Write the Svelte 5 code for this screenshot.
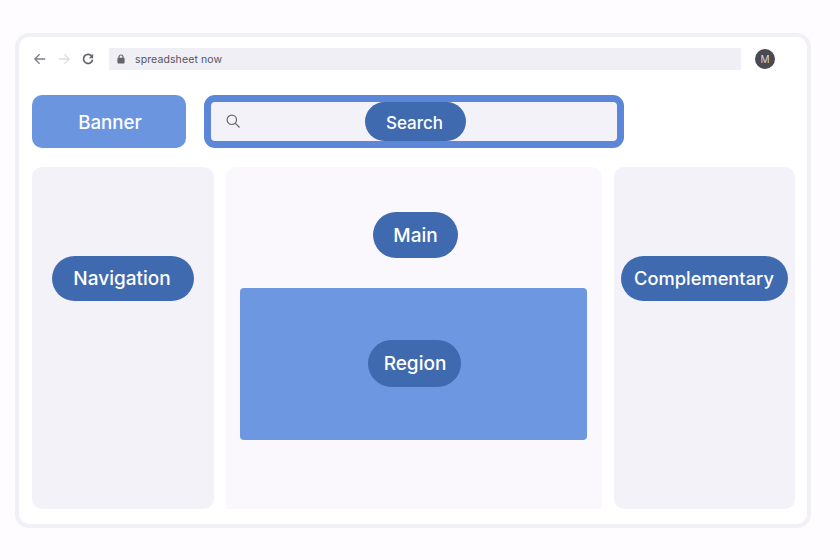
<script>
	const address = 'spreadsheet now';
</script>

<div class="page">
	<div class="frame">
		<div class="toolbar">
			<div class="nav-buttons">
				<svg class="nav-icon" viewBox="0 0 14 14" width="12" height="12">
					<path d="M13 7H1.500M6.500 1.500 1 7l5.500 5.500" />
				</svg>
				<svg class="nav-icon disabled" viewBox="0 0 14 14" width="12" height="12">
					<path d="M1 7h11.500M7.500 1.500 13 7l-5.500 5.500" />
				</svg>
				<svg class="nav-icon reload" viewBox="0 0 14 14" width="12" height="12">
					<path d="M11.600 4.200A5.300 5.300 0 1 0 12.300 7.600" />
					<path class="solid" d="M13 1v5H8z" />
				</svg>
			</div>
			<div class="address">
				<svg viewBox="0 0 10 12" width="8" height="10">
					<path class="lock" d="M2.500 5V3.500a2.500 2.500 0 0 1 5 0V5" />
					<rect x="0.500" y="4.500" width="9" height="7" rx="1" />
				</svg>
				<span>{address}</span>
			</div>
			<div class="avatar">M</div>
		</div>

		<div class="top-row">
			<div class="banner">Banner</div>
			<div class="search">
				<svg class="search-icon" viewBox="0 0 14 14" width="14" height="14">
					<circle cx="5.800" cy="5.800" r="4.700" />
					<path d="M9.200 9.200 13.500 13.500" />
				</svg>
				<div class="pill search-pill">Search</div>
			</div>
		</div>

		<div class="columns">
			<aside class="side">
				<div class="pill nav-pill">Navigation</div>
			</aside>
			<main class="content">
				<div class="pill main-pill">Main</div>
				<section class="region">
					<div class="pill region-pill">Region</div>
				</section>
			</main>
			<aside class="side comp-side">
				<div class="pill comp-pill">Complementary</div>
			</aside>
		</div>
	</div>
</div>

<style>
	:global(body) {
		background: #fefcff;
	}

	.page {
		width: 840px;
		height: 560px;
		box-sizing: border-box;
		padding: 33px 29px 32px 15px;
		font-family: Inter, 'Liberation Sans', sans-serif;
		background: #fefcff;
	}

	.frame {
		height: 100%;
		box-sizing: border-box;
		background: #fff;
		border: 4px solid #f1f0f6;
		border-radius: 14px;
		padding: 11px 12px 15px 13px;
		display: flex;
		flex-direction: column;
	}

	.toolbar {
		height: 22px;
		display: flex;
		align-items: center;
	}

	.nav-buttons {
		width: 77px;
		flex-shrink: 0;
		box-sizing: border-box;
		padding-left: 2px;
		display: flex;
		align-items: center;
		gap: 12px;
	}

	.nav-icon {
		fill: none;
		stroke: #7d7c84;
		stroke-width: 1.500;
	}

	.nav-icon.disabled {
		stroke: #dcdce2;
	}

	.nav-icon.reload {
		stroke: #66656c;
		stroke-width: 2;
	}

	.nav-icon .solid {
		fill: #66656c;
		stroke: none;
	}

	.address {
		width: 632px;
		height: 22px;
		flex-shrink: 0;
		background: #f0eff6;
		display: flex;
		align-items: center;
		padding-left: 8px;
		box-sizing: border-box;
		font-size: 10.500px;
		letter-spacing: 0.110px;
		color: #55545c;
	}

	.address svg {
		margin-right: 10px;
		fill: #66656c;
	}

	.address .lock {
		fill: none;
		stroke: #66656c;
		stroke-width: 1.500;
	}

	.avatar {
		width: 20px;
		height: 20px;
		margin-left: 14px;
		border-radius: 50%;
		background: #4b4a50;
		color: #d8d8dc;
		font-size: 10px;
		display: flex;
		align-items: center;
		justify-content: center;
	}

	.top-row {
		display: flex;
		gap: 18px;
		margin-top: 25px;
		height: 53px;
	}

	.banner {
		width: 154px;
		background: #6b96df;
		border-radius: 10px;
		color: #fff;
		font-size: 18.700px;
		font-weight: 500;
		display: flex;
		align-items: center;
		justify-content: center;
		padding: 1px 0 0 2px;
		box-sizing: border-box;
	}

	.search {
		width: 420px;
		box-sizing: border-box;
		border: 7px solid #5c87d8;
		border-radius: 11px;
		background: #f4f2f9;
		display: flex;
		align-items: center;
	}

	.search-icon {
		fill: none;
		stroke: #66656c;
		stroke-width: 1.200;
		margin-left: 15px;
		margin-bottom: 2px;
		flex-shrink: 0;
	}

	.pill {
		background: #3f6ab0;
		color: #fff;
		font-size: 19px;
		font-weight: 500;
		border-radius: 24px;
		display: flex;
		align-items: center;
		justify-content: center;
		flex-shrink: 0;
		box-sizing: border-box;
	}

	.search-pill {
		width: 101px;
		height: 39px;
		margin-left: 125px;
		padding: 2px 2px 0 0;
		font-size: 17px;
		border-radius: 20px;
	}

	.columns {
		flex: 1;
		display: flex;
		gap: 12px;
		margin-top: 19px;
		min-height: 0;
	}

	.side {
		width: 182px;
		flex-shrink: 0;
		background: #f4f2f9;
		border-radius: 10px;
		display: flex;
		align-items: center;
		justify-content: center;
		padding-bottom: 120px;
		box-sizing: border-box;
	}

	.comp-side {
		width: 181px;
	}

	.nav-pill {
		width: 142px;
		height: 45px;
		padding-right: 2px;
	}

	.comp-pill {
		width: 167px;
		height: 45px;
		font-size: 18.300px;
		margin-right: 1px;
	}

	.content {
		width: 376px;
		flex-shrink: 0;
		background: #faf8fd;
		border-radius: 10px 10px 0 0;
		display: flex;
		flex-direction: column;
		align-items: center;
		box-sizing: border-box;
		padding-top: 45px;
	}

	.main-pill {
		width: 85px;
		height: 46px;
		margin-left: 3px;
	}

	.region {
		width: 347px;
		height: 152px;
		margin-top: 30px;
		margin-right: 1px;
		background: #6e97e1;
		border-radius: 4px;
		display: flex;
		align-items: center;
		justify-content: center;
	}

	.region-pill {
		width: 93px;
		height: 47px;
		margin: 0 0 2px 1px;
		padding-left: 2px;
	}
</style>
